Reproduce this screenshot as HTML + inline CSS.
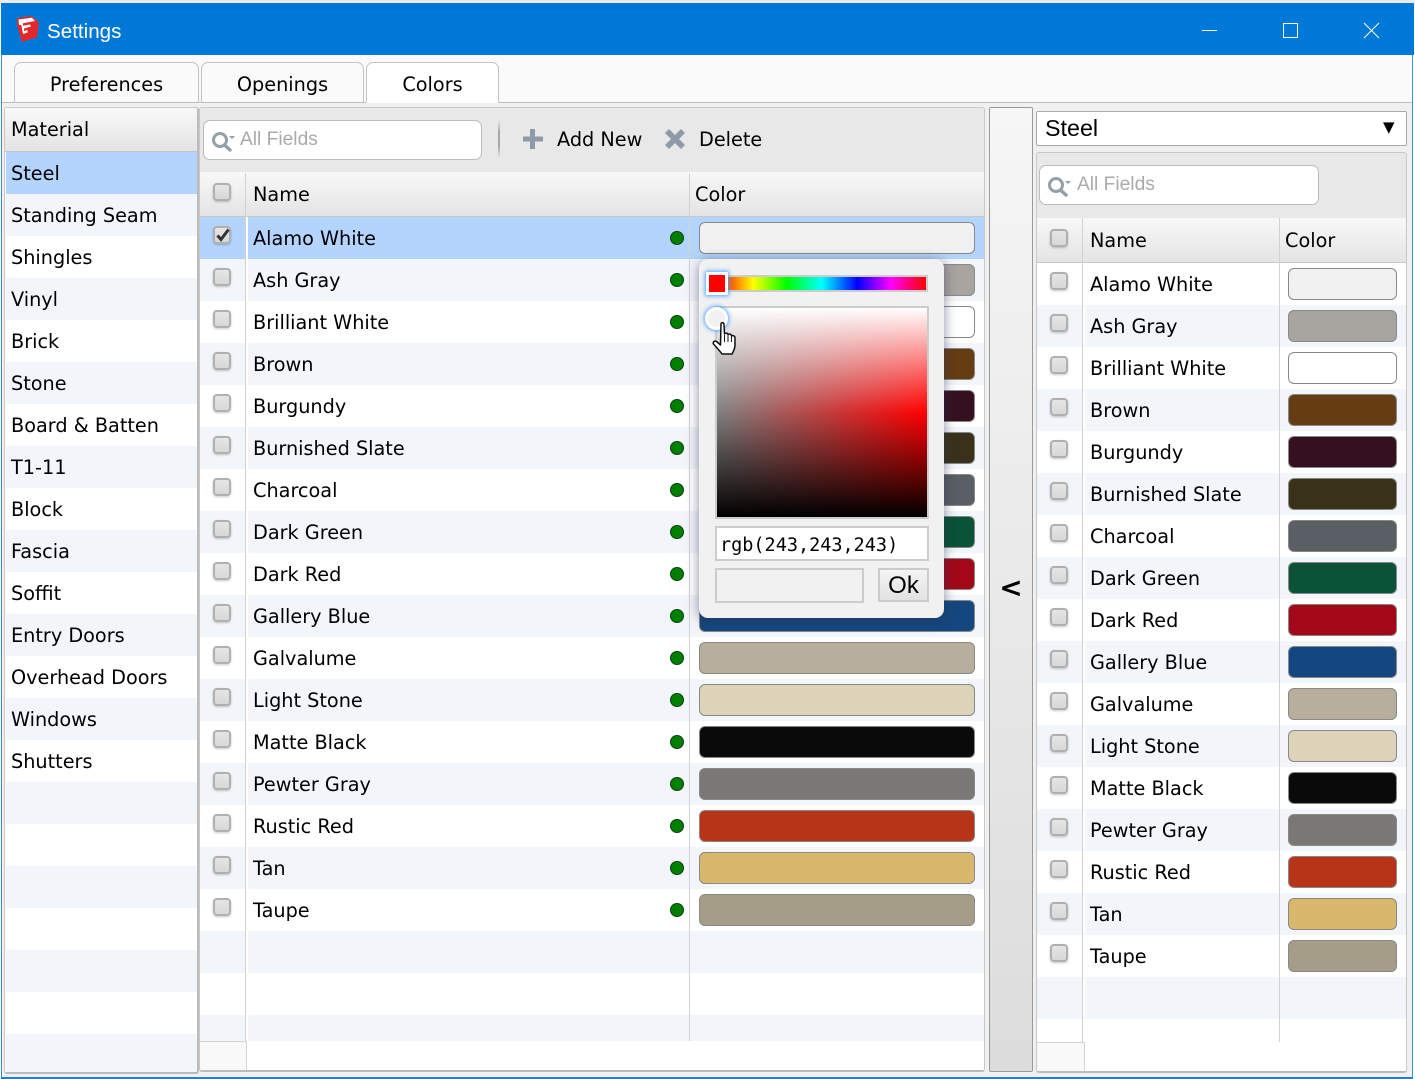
<!DOCTYPE html>
<html><head><meta charset="utf-8"><title>Settings</title>
<style>
html,body{margin:0;padding:0;background:#fff}
body{position:relative;width:1415px;height:1079px;overflow:hidden;font-family:"DejaVu Sans",sans-serif;font-size:19.25px;color:#000}
div,span,svg{box-sizing:border-box}
.a{position:absolute}
#top{left:0;top:0;width:1415px;height:3px;background:#ececec}
#title{left:1px;top:3px;width:1413px;height:52px;background:#0078d7}
#frameL{left:1px;top:55px;width:1px;height:1024px;background:#3b8fd6}
#frameR{left:1412px;top:55px;width:1px;height:1024px;background:#3b8fd6}
#frameB{left:1px;top:1077px;width:1412px;height:2px;background:#1c82d8}
#win{left:2px;top:55px;width:1410px;height:1022px;background:#f0f0f0}
#strip{left:2px;top:55px;width:1410px;height:48px;background:#fafafa;border-bottom:1px solid #bdbdbd}
.settings{left:46px;top:15px;color:#fff;font:20.6px/27px "Liberation Sans",sans-serif}
.tab{top:62px;height:41px;border:1px solid #c4c4c4;border-bottom:1px solid #bdbdbd;border-radius:7px 7px 0 0;background:#fafafa;text-align:center;line-height:44px}
.list{left:4px;top:107px;width:195px;height:967px;background:#fff;border:1px solid #c8c8c8;border-bottom:2px solid #bbb;border-right:2px solid #bbb;border-radius:3px;overflow:hidden}
.lh{height:44px;background:linear-gradient(#f9f9f9,#e3e3e3);border-bottom:1px solid #c4c4c4;padding-left:6px;line-height:44px}
.lb{margin-left:1px}
.lr{height:42px;line-height:44px;padding-left:5px}
.lb .lr:nth-child(even){background:#f2f5fa}
.lb .lr.sel{background:#b3d4fc}
.panel{background:#fff;border:1px solid #c8c8c8;border-bottom:2px solid #bbb;border-radius:3px;overflow:hidden}
.bar{position:absolute;left:0;top:0;right:0;height:65px;background:#e8e8e8}
.search{position:absolute;top:12px;height:40px;background:#fff;border:1px solid #bdbdbd;border-radius:7px;color:#aaa;font:19.2px/38px "Liberation Sans",sans-serif;padding-left:36px}
.mag{position:absolute;left:7px;top:9px}
.sep{left:498px;top:120px;width:2px;height:38px;background:linear-gradient(#e8e8e8,#a8a8a8 30%,#a8a8a8 70%,#e8e8e8)}
.head{position:absolute;left:0;right:0;height:45px;background:linear-gradient(#f8f8f8,#e4e4e4);border-bottom:1px solid #c8c8c8;line-height:45px}
.head .t{top:0}
.rows{position:absolute;left:0;right:0}
.r{position:relative;height:42px;line-height:42px;background:#fff}
.r:nth-child(even){background:#f2f5fa}
.r.sel{background:#b3d4fc}
.t{position:absolute;top:1px;white-space:nowrap}
.cb{position:absolute;width:18px;height:18px;border:2px solid #b0b0b0;border-radius:4px;background:linear-gradient(#e6e6e6,#d8d8d8);box-shadow:0 1px 2px rgba(0,0,0,.22)}
.dot{position:absolute;top:14px;width:14px;height:14px;border-radius:50%;background:#008000;border:1px solid #0a400a}
.sw{position:absolute;top:5px;height:32px;border:1px solid #888;border-radius:6px}
.vl{position:absolute;width:1px;background:#d2d2d2}
.gap{position:absolute;width:2px;background:#fff}
.foot{position:absolute;background:#f9f9f9;border-top:1px solid #d4d4d4;border-right:1px solid #d4d4d4}
#m .t.n{left:53px}#m .cb{left:13px;top:9px}#m .dot{left:470px}#m .sw{left:499px;width:276px}
#g .t.n{left:53px}#g .cb{left:13px;top:9px}#g .sw{left:251px;width:109px}
#col{left:989px;top:107px;width:44px;height:965px;background:linear-gradient(#f6f6f6,#dcdcdc);border:1px solid #9a9a9a;border-radius:2px;font:bold 28px/28px "DejaVu Sans",sans-serif;text-align:center}
#sel{left:1036px;top:111px;width:371px;height:35px;background:#fff;border:1px solid #aaa;border-radius:2px;font:23.3px/33px "Liberation Sans",sans-serif;padding-left:8px}
#pop{left:699px;top:259px;width:245px;height:359px;background:#f1f1f1;border-radius:9px;box-shadow:0 2px 12px rgba(40,50,80,.55)}
#hue{left:17px;top:16px;width:212px;height:17px;border:2px solid #ccc;background:linear-gradient(90deg,#f00,#ff0 17%,#0f0 33%,#0ff 50%,#00f 67%,#f0f 83%,#f00)}
#hth{left:7px;top:13px;width:22px;height:23px;background:#f00;border:3px solid #fff;box-shadow:0 0 4px 1px #4aa6ff}
#sv{left:16px;top:47px;width:214px;height:213px;border:2px solid #ccc;background:linear-gradient(#fff,rgba(255,255,255,0) 50%,rgba(0,0,0,0) 50%,#000),linear-gradient(90deg,#808080,#f00)}
#svt{left:6px;top:48px;width:23px;height:23px;border-radius:50%;background:#f1f1f1;border:3px solid #fff;box-shadow:0 0 4px 1px #4aa6ff}
#inp{left:16px;top:267px;width:214px;height:35px;background:#fff;border:2px solid #ccc;font:18.5px/35px "DejaVu Sans Mono",monospace;padding-left:3px}
#cur{left:16px;top:309px;width:149px;height:35px;border:2px solid #ccc;background:#f1f1f1}
#ok{left:179px;top:309px;width:51px;height:34px;border:2px solid #ccc;background:linear-gradient(#f4f4f4,#e2e2e2);font:24px/32px "Liberation Sans",sans-serif;text-align:center}
</style></head><body>
<div class="a" id="top"></div>
<div class="a" id="title">
<svg class="a" style="left:14px;top:13px" width="26" height="28" viewBox="0 0 26 28"><path d="M2 2 L17 0 L24 7 L22 21 L7 26 L2 9Z" fill="#e3282c"/><path d="M3.5 3.5 L17 1.8 L20 5 L8 7.2 L8 9.8 L15 8.5 L16 10.5 L9 12.5 L9 15 L12.5 14 L12.5 16.5 L8 18 L6.3 9 L4 9Z" fill="#fff"/></svg>
<div class="a settings">Settings</div>
<svg class="a" style="left:1200px;top:18px" width="190" height="20" viewBox="0 0 190 20" fill="none" stroke="#fff" stroke-width="1"><path d="M1 9.5H16"/><rect x="82.5" y="2.5" width="14" height="14"/><path d="M163 2 L178 17 M178 2 L163 17"/></svg>
</div>
<div class="a" id="win"></div>
<div class="a" id="frameL"></div><div class="a" id="frameR"></div><div class="a" id="frameB"></div>
<div class="a" id="strip"></div>
<div class="a tab" style="left:14px;width:185px">Preferences</div>
<div class="a tab" style="left:201px;width:163px">Openings</div>
<div class="a tab" style="left:366px;width:133px;background:#fff;border-bottom:1px solid #fff">Colors</div>

<div class="a list">
<div class="lh">Material</div>
<div class="lb">
<div class="lr sel">Steel</div><div class="lr">Standing Seam</div><div class="lr">Shingles</div><div class="lr">Vinyl</div><div class="lr">Brick</div><div class="lr">Stone</div><div class="lr">Board &amp; Batten</div><div class="lr">T1-11</div><div class="lr">Block</div><div class="lr">Fascia</div><div class="lr">Soffit</div><div class="lr">Entry Doors</div><div class="lr">Overhead Doors</div><div class="lr">Windows</div><div class="lr">Shutters</div><div class="lr"></div><div class="lr"></div><div class="lr"></div><div class="lr"></div><div class="lr"></div><div class="lr"></div><div class="lr"></div><div class="lr"></div>
</div></div>

<div class="a panel" id="m" style="left:199px;top:107px;width:786px;height:965px">
<div class="bar"></div>
<div class="search" style="left:3px;width:279px"><svg class="mag" width="28" height="22" viewBox="0 0 28 22"><circle cx="9" cy="10" r="6.5" fill="none" stroke="#93a0a8" stroke-width="3"/><path d="M13.5 15 L19 20" stroke="#93a0a8" stroke-width="3.5" stroke-linecap="round"/><path d="M18 6h6l-3 3z" fill="#93a0a8"/></svg>All Fields</div>
<div class="head" style="top:64px"><span class="cb" style="left:13px;top:11px"></span><span class="t" style="left:53px">Name</span><span class="t" style="left:495px">Color</span></div>
<div class="rows" style="top:109px">
<div class="r sel"><span class="cb" style="background:linear-gradient(#e6e6e6,#d8d8d8)"></span><svg class="a" style="left:14px;top:9px" width="18" height="18" viewBox="0 0 18 18"><path d="M3.5 9.5 L7 13.5 L14.5 3.5" fill="none" stroke="#333" stroke-width="3"/></svg><span class="t n">Alamo White</span><span class="dot"></span><span class="sw" style="background:#f1f1f1"></span></div>
<div class="r"><span class="cb"></span><span class="t n">Ash Gray</span><span class="dot"></span><span class="sw" style="background:#a8a4a0"></span></div>
<div class="r"><span class="cb"></span><span class="t n">Brilliant White</span><span class="dot"></span><span class="sw" style="background:#fff"></span></div>
<div class="r"><span class="cb"></span><span class="t n">Brown</span><span class="dot"></span><span class="sw" style="background:#663c13"></span></div>
<div class="r"><span class="cb"></span><span class="t n">Burgundy</span><span class="dot"></span><span class="sw" style="background:#35101f"></span></div>
<div class="r"><span class="cb"></span><span class="t n">Burnished Slate</span><span class="dot"></span><span class="sw" style="background:#3a3218"></span></div>
<div class="r"><span class="cb"></span><span class="t n">Charcoal</span><span class="dot"></span><span class="sw" style="background:#5a5e65"></span></div>
<div class="r"><span class="cb"></span><span class="t n">Dark Green</span><span class="dot"></span><span class="sw" style="background:#0a5238"></span></div>
<div class="r"><span class="cb"></span><span class="t n">Dark Red</span><span class="dot"></span><span class="sw" style="background:#a30818"></span></div>
<div class="r"><span class="cb"></span><span class="t n">Gallery Blue</span><span class="dot"></span><span class="sw" style="background:#14477f"></span></div>
<div class="r"><span class="cb"></span><span class="t n">Galvalume</span><span class="dot"></span><span class="sw" style="background:#b8ae9c"></span></div>
<div class="r"><span class="cb"></span><span class="t n">Light Stone</span><span class="dot"></span><span class="sw" style="background:#dcd3b8"></span></div>
<div class="r"><span class="cb"></span><span class="t n">Matte Black</span><span class="dot"></span><span class="sw" style="background:#0a0a0a"></span></div>
<div class="r"><span class="cb"></span><span class="t n">Pewter Gray</span><span class="dot"></span><span class="sw" style="background:#797875"></span></div>
<div class="r"><span class="cb"></span><span class="t n">Rustic Red</span><span class="dot"></span><span class="sw" style="background:#b83418"></span></div>
<div class="r"><span class="cb"></span><span class="t n">Tan</span><span class="dot"></span><span class="sw" style="background:#d8b86c"></span></div>
<div class="r"><span class="cb"></span><span class="t n">Taupe</span><span class="dot"></span><span class="sw" style="background:#a59d88"></span></div>
<div class="r"></div><div class="r"></div><div class="r"></div>
</div>
<div class="vl" style="left:45px;top:65px;height:868px"></div>
<div class="gap" style="left:46px;top:109px;height:824px"></div>
<div class="vl" style="left:489px;top:65px;height:868px"></div>
<div class="a" style="left:0;top:933px;width:786px;height:32px;background:#fff"></div>
<div class="foot" style="left:0;top:933px;width:47px;height:32px"></div>
</div>
<div class="a sep"></div>
<svg class="a" style="left:522px;top:128px" width="22" height="22" viewBox="0 0 22 22"><path d="M8 1h5v7.5h8v5h-8V21H8v-7.5H1v-5h7z" fill="#8f9aa8"/></svg>
<div class="a" style="left:557px;top:128px;line-height:24px">Add New</div>
<svg class="a" style="left:664px;top:128px" width="22" height="22" viewBox="0 0 22 22"><path d="M5 1 L11 7 L17 1 L21 5 L15 11 L21 17 L17 21 L11 15 L5 21 L1 17 L7 11 L1 5Z" fill="#8f9aa8"/></svg>
<div class="a" style="left:699px;top:128px;line-height:24px">Delete</div>

<div class="a" id="col"><span class="a" style="left:0;width:42px;top:466px">&lt;</span></div>

<div class="a" id="sel">Steel<span class="a" style="left:346px;top:0;font:15px/30px 'DejaVu Sans',sans-serif">▼</span></div>

<div class="a panel" id="g" style="left:1036px;top:152px;width:371px;height:921px">
<div class="bar"></div>
<div class="search" style="left:2px;width:280px;padding-left:37px"><svg class="mag" width="28" height="22" viewBox="0 0 28 22"><circle cx="9" cy="10" r="6.5" fill="none" stroke="#93a0a8" stroke-width="3"/><path d="M13.5 15 L19 20" stroke="#93a0a8" stroke-width="3.5" stroke-linecap="round"/><path d="M18 6h6l-3 3z" fill="#93a0a8"/></svg>All Fields</div>
<div class="head" style="top:65px"><span class="cb" style="left:13px;top:11px"></span><span class="t" style="left:53px">Name</span><span class="t" style="left:248px">Color</span></div>
<div class="rows" style="top:110px">
<div class="r"><span class="cb"></span><span class="t n">Alamo White</span><span class="sw" style="background:#f1f1f1"></span></div>
<div class="r"><span class="cb"></span><span class="t n">Ash Gray</span><span class="sw" style="background:#a8a4a0"></span></div>
<div class="r"><span class="cb"></span><span class="t n">Brilliant White</span><span class="sw" style="background:#fff"></span></div>
<div class="r"><span class="cb"></span><span class="t n">Brown</span><span class="sw" style="background:#663c13"></span></div>
<div class="r"><span class="cb"></span><span class="t n">Burgundy</span><span class="sw" style="background:#35101f"></span></div>
<div class="r"><span class="cb"></span><span class="t n">Burnished Slate</span><span class="sw" style="background:#3a3218"></span></div>
<div class="r"><span class="cb"></span><span class="t n">Charcoal</span><span class="sw" style="background:#5a5e65"></span></div>
<div class="r"><span class="cb"></span><span class="t n">Dark Green</span><span class="sw" style="background:#0a5238"></span></div>
<div class="r"><span class="cb"></span><span class="t n">Dark Red</span><span class="sw" style="background:#a30818"></span></div>
<div class="r"><span class="cb"></span><span class="t n">Gallery Blue</span><span class="sw" style="background:#14477f"></span></div>
<div class="r"><span class="cb"></span><span class="t n">Galvalume</span><span class="sw" style="background:#b8ae9c"></span></div>
<div class="r"><span class="cb"></span><span class="t n">Light Stone</span><span class="sw" style="background:#dcd3b8"></span></div>
<div class="r"><span class="cb"></span><span class="t n">Matte Black</span><span class="sw" style="background:#0a0a0a"></span></div>
<div class="r"><span class="cb"></span><span class="t n">Pewter Gray</span><span class="sw" style="background:#797875"></span></div>
<div class="r"><span class="cb"></span><span class="t n">Rustic Red</span><span class="sw" style="background:#b83418"></span></div>
<div class="r"><span class="cb"></span><span class="t n">Tan</span><span class="sw" style="background:#d8b86c"></span></div>
<div class="r"><span class="cb"></span><span class="t n">Taupe</span><span class="sw" style="background:#a59d88"></span></div>
<div class="r"></div><div class="r"></div>
</div>
<div class="vl" style="left:45px;top:65px;height:824px"></div>
<div class="gap" style="left:46px;top:110px;height:779px"></div>
<div class="vl" style="left:242px;top:65px;height:824px"></div>
<div class="a" style="left:0;top:889px;width:371px;height:32px;background:#fff"></div>
<div class="foot" style="left:0;top:889px;width:48px;height:30px"></div>
</div>

<div class="a" id="pop">
<div class="a" id="hue"></div>
<div class="a" id="sv"></div>
<div class="a" id="hth"></div>
<div class="a" id="svt"></div>
<svg class="a" style="left:13px;top:62px" width="26" height="34" viewBox="0 0 26 34"><path d="M9 2.5 C10 1 12 1.5 12 3.5 L12.5 13 C14 11.5 15.5 12 16 13.5 C17.5 12.5 19 13 19.5 14.8 C21 14 23 15 23 17 L23 24 C23 28 21 31 20 33 L10 33 C8 30 5 27 1.5 23 C0.5 21 2.5 19.5 4.5 20.5 L8.5 24 Z" fill="#fff" stroke="#111" stroke-width="1.5" stroke-linejoin="round"/><path d="M12.5 14 V21 M16 14 V21 M19.5 15 V21" stroke="#111" stroke-width="1" fill="none"/></svg>
<div class="a" id="inp">rgb(243,243,243)</div>
<div class="a" id="cur"></div>
<div class="a" id="ok">Ok</div>
</div>
</body></html>
